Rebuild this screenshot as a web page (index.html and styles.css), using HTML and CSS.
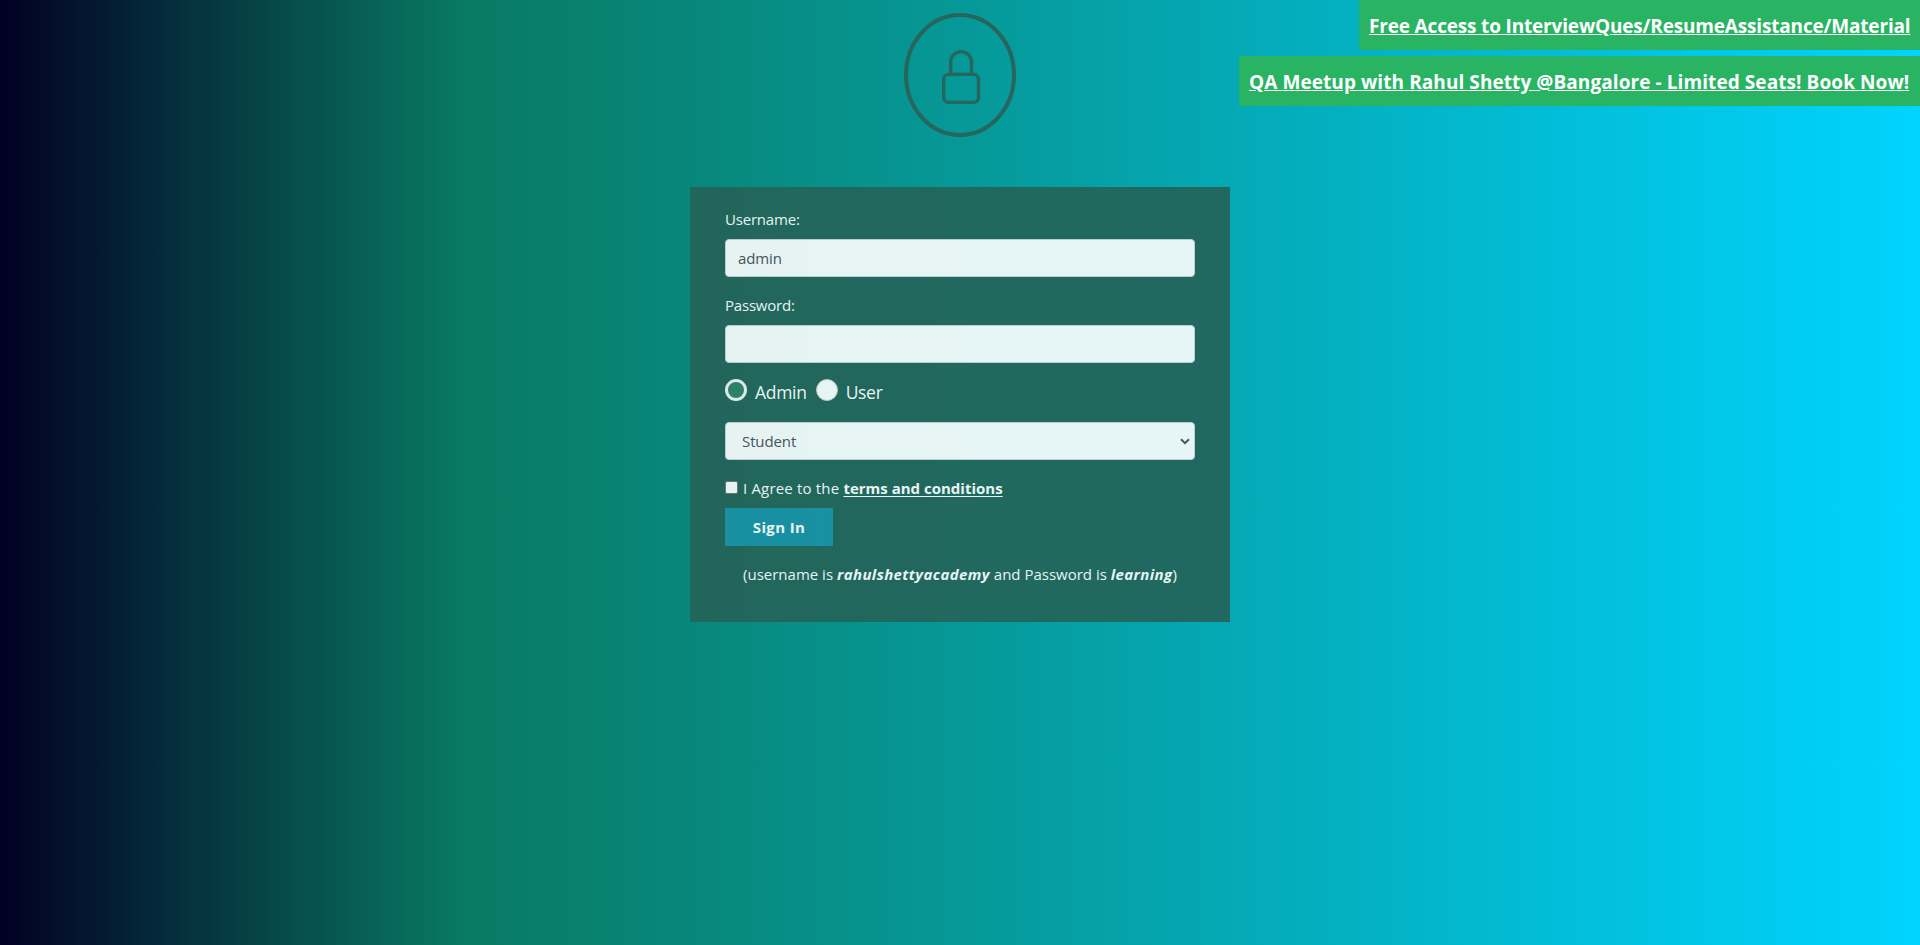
FILE: index.html
```
<!DOCTYPE html>
<html lang="en">
<head>
<meta charset="utf-8">
<title>LoginPage Practise</title>
<link rel="stylesheet" href="styles.css">
</head>
<body>
<div class="promos">
  <a class="promo promo-access" href="#">Free Access to InterviewQues/ResumeAssistance/Material</a>
  <a class="promo promo-meetup" href="#">QA Meetup with Rahul Shetty @Bangalore - Limited Seats! Book Now!</a>
</div>
<main class="page">
  <svg class="lock" viewBox="0 0 112 124" fill="none" stroke="#27665c">
    <ellipse cx="56" cy="62" rx="54" ry="60" stroke-width="4"/>
    <path d="M46.7 61V49a10.4 10.4 0 0 1 20.8 0V61" stroke-width="3.4"/>
    <rect x="39.7" y="61.4" width="34.8" height="28" rx="5" stroke-width="3.4"/>
  </svg>
  <form class="card">
    <label class="label" for="username">Username:</label>
    <input class="field" id="username" type="text" value="admin">
    <label class="label" for="password">Password:</label>
    <input class="field" id="password" type="password">
    <div class="roles">
      <label class="role"><input class="radio" type="radio" name="role" checked><span class="role-text">Admin</span></label>
      <label class="role"><input class="radio" type="radio" name="role"><span class="role-text">User</span></label>
    </div>
    <div class="select-wrap">
      <select class="field select"><option>Student</option><option>Teacher</option><option>Consultant</option></select>
      <svg class="chevron" viewBox="0 0 10 7" fill="none" stroke="#495057" stroke-width="2"><path d="M1 1.2L5 5.2L9 1.2"/></svg>
    </div>
    <div class="terms">
      <input class="check" id="terms" type="checkbox">
      <label for="terms"><span class="agree">I Agree to the </span><a class="terms-link" href="#">terms and conditions</a></label>
    </div>
    <button class="signin" type="button">Sign In</button>
    <p class="hint">(username is <b class="value">rahulshettyacademy</b> and Password is <b class="value">learning</b>)</p>
  </form>
</main>
</body>
</html>
```
FILE: styles.css
```
* { box-sizing: border-box; }
html { height: 100%; }
body {
  margin: 0;
  min-height: 100%;
  overflow: hidden;
  font: 15px/24px "Open Sans", "Noto Sans", sans-serif;
  letter-spacing: -0.2px;
  color: #fff;
  background: linear-gradient(90deg, #020024 0%, #097962 24%, #00d4ff 100%);
}
.promos {
  position: absolute;
  top: 0;
  right: 0;
  display: flex;
  flex-direction: column;
  align-items: flex-end;
  gap: 6px;
}
.promo {
  display: block;
  height: 50px;
  padding: 11px 10px 9px;
  line-height: 30px;
  white-space: nowrap;
  font-size: 19px;
  font-weight: 700;
  color: #fff;
  background: #28b463;
}
.promo-access { width: 561px; letter-spacing: -0.17px; }
.promo-meetup { width: 681px; letter-spacing: 0.08px; }
.page {
  display: flex;
  flex-direction: column;
  align-items: center;
  padding-top: 13px;
}
.lock { width: 112px; height: 124px; }
.card {
  width: 540px;
  height: 435px;
  margin-top: 50px;
  padding: 20px 35px;
  background: #256358;
  opacity: 0.9;
}
.label { display: block; margin-bottom: 8px; }
.field {
  display: block;
  width: 100%;
  height: 38px;
  margin: 0 0 16px;
  padding: 6px 12px;
  font: inherit;
  letter-spacing: -0.1px;
  color: #495057;
  background: #fff;
  border: 1px solid #ced4da;
  border-radius: 4px;
  outline: 0;
}
.roles { display: flex; gap: 9px; height: 43px; }
.role { display: flex; gap: 8px; }
.role-text { font-size: 17.5px; line-height: 26px; letter-spacing: -0.3px; }
.radio {
  appearance: none;
  width: 22px;
  height: 22px;
  margin: 0;
  border: 1px solid #ccc;
  border-radius: 50%;
  background: #fff;
}
.radio:checked { border: 3px solid #f4f4f4; background: #2e8268; }
.select-wrap { position: relative; }
.select { appearance: none; padding-left: 16px; }
.chevron { position: absolute; right: 5px; top: 16px; width: 10px; height: 7px; }
.terms { display: flex; gap: 5px; height: 32px; }
.check {
  appearance: none;
  width: 13px;
  height: 13px;
  margin: 5px 0 0;
  background: #fff;
  border: 1px solid #767676;
  border-radius: 2px;
}
.agree { letter-spacing: 0.18px; }
.terms-link { font-weight: 700; letter-spacing: 0; color: #fff; text-underline-offset: 2px; }
.signin {
  display: block;
  width: 108px;
  height: 38px;
  border: 0;
  padding: 0;
  font: inherit;
  font-weight: 700;
  letter-spacing: 0.35px;
  color: #fff;
  background: #1b91a6;
}
.hint { margin: 16px 0 0; text-align: center; white-space: nowrap; letter-spacing: 0; }
.value { font-style: italic; letter-spacing: 0.38px; }
```
